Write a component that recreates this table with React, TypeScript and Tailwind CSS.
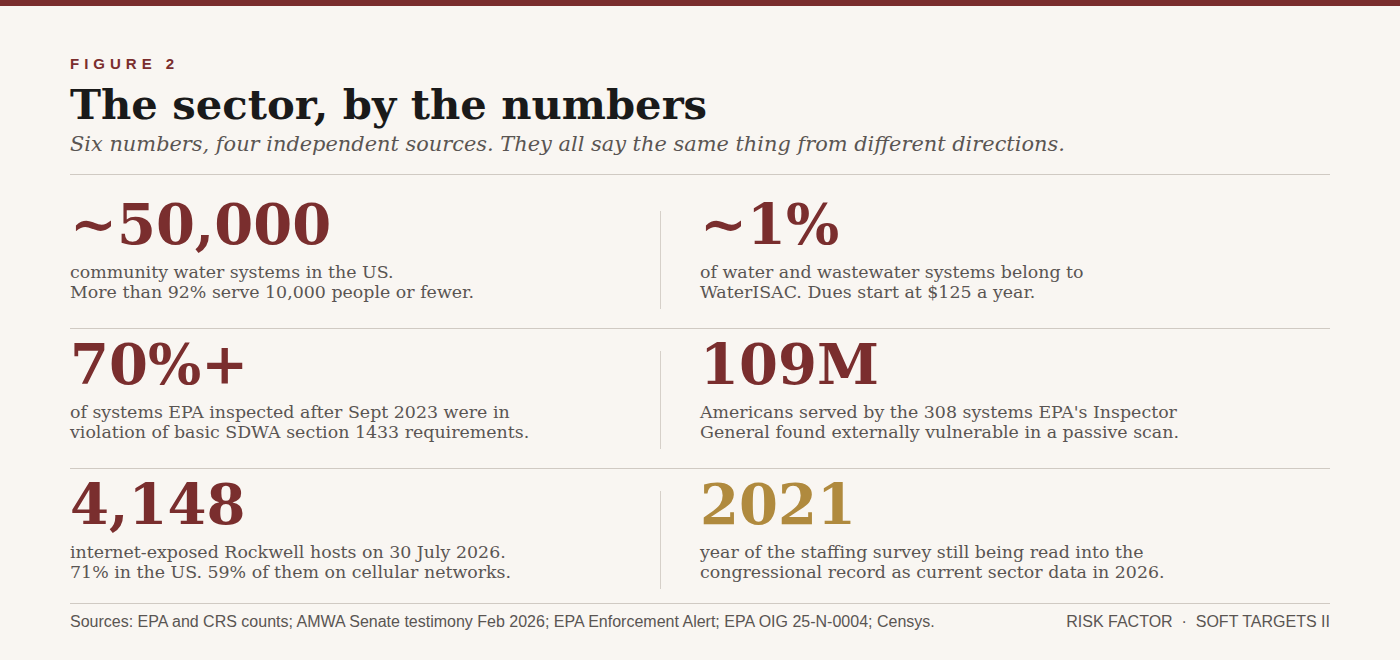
import React from 'react'

interface Stat {
  value: string
  lines: string[]
  gold?: boolean
}

const ROWS: [Stat, Stat][] = [
  [
    { value: '~50,000', lines: ['community water systems in the US.', 'More than 92% serve 10,000 people or fewer.'] },
    { value: '~1%', lines: ['of water and wastewater systems belong to', 'WaterISAC. Dues start at $125 a year.'] },
  ],
  [
    { value: '70%+', lines: ['of systems EPA inspected after Sept 2023 were in', 'violation of basic SDWA section 1433 requirements.'] },
    { value: '109M', lines: ["Americans served by the 308 systems EPA's Inspector", 'General found externally vulnerable in a passive scan.'] },
  ],
  [
    { value: '4,148', lines: ['internet-exposed Rockwell hosts on 30 July 2026.', '71% in the US. 59% of them on cellular networks.'] },
    { value: '2021', lines: ['year of the staffing survey still being read into the', 'congressional record as current sector data in 2026.'], gold: true },
  ],
]

const serif = "font-['DejaVu_Serif',serif]"

const StatCell: React.FC<{ stat: Stat }> = ({ stat }) => (
  <div>
    <div
      className={`${serif} text-[56px] leading-none font-bold ${
        stat.gold ? 'text-[#b08a3e]' : 'text-[#7a2e2e]'
      }`}
    >
      {stat.value}
    </div>
    <p className={`${serif} mt-2.5 text-[17.4px] leading-[20px] text-[#5a5552]`}>
      {stat.lines[0]}
      <br />
      {stat.lines[1]}
    </p>
  </div>
)

export default function App() {
  return (
    <div className="w-[1400px] h-[660px] bg-[#f9f6f2] overflow-hidden">
      <div className="h-[6px] bg-[#7a2e2e]" />
      <div className="px-[70px] pt-[50px]">
        {/* header */}
        <div className="pb-[19px] border-b border-[#d0cac3]">
          <div className="font-['Liberation_Sans',sans-serif] text-[15px] leading-none font-bold tracking-[5px] text-[#7a2e2e]">
            FIGURE 2
          </div>
          <h1 className={`${serif} mt-[13px] text-[41.7px] leading-none font-bold text-[#1a1a1a]`}>
            The sector, by the numbers
          </h1>
          <p className={`${serif} mt-[8px] text-[20.9px] leading-none italic text-[#5a5552]`}>
            Six numbers, four independent sources. They all say the same thing from different directions.
          </p>
        </div>

        {/* stats */}
        <div className="pt-[14px]">
          {ROWS.map((row, i) => (
            <div
              key={i}
              className={`flex pt-[7px] ${i > 0 ? 'border-t border-[#d0cac3]' : ''} ${
                i === ROWS.length - 1 ? 'pb-[14px]' : 'pb-[19px]'
              }`}
            >
              <div className="w-[590px]">
                <StatCell stat={row[0]} />
              </div>
              <div className="w-px h-[98px] mt-[15px] bg-[#d6d0c9]" />
              <div className="flex-1 pl-[39px]">
                <StatCell stat={row[1]} />
              </div>
            </div>
          ))}
        </div>

        {/* footer */}
        <div className="flex justify-between items-center border-t border-[#d0cac3] pt-[9px] font-['Liberation_Sans',sans-serif] text-[16px] leading-[18px] text-[#5a5552]">
          <span>Sources: EPA and CRS counts; AMWA Senate testimony Feb 2026; EPA Enforcement Alert; EPA OIG 25-N-0004; Censys.</span>
          <span>RISK FACTOR &nbsp;·&nbsp; SOFT TARGETS II</span>
        </div>
      </div>
    </div>
  )
}
